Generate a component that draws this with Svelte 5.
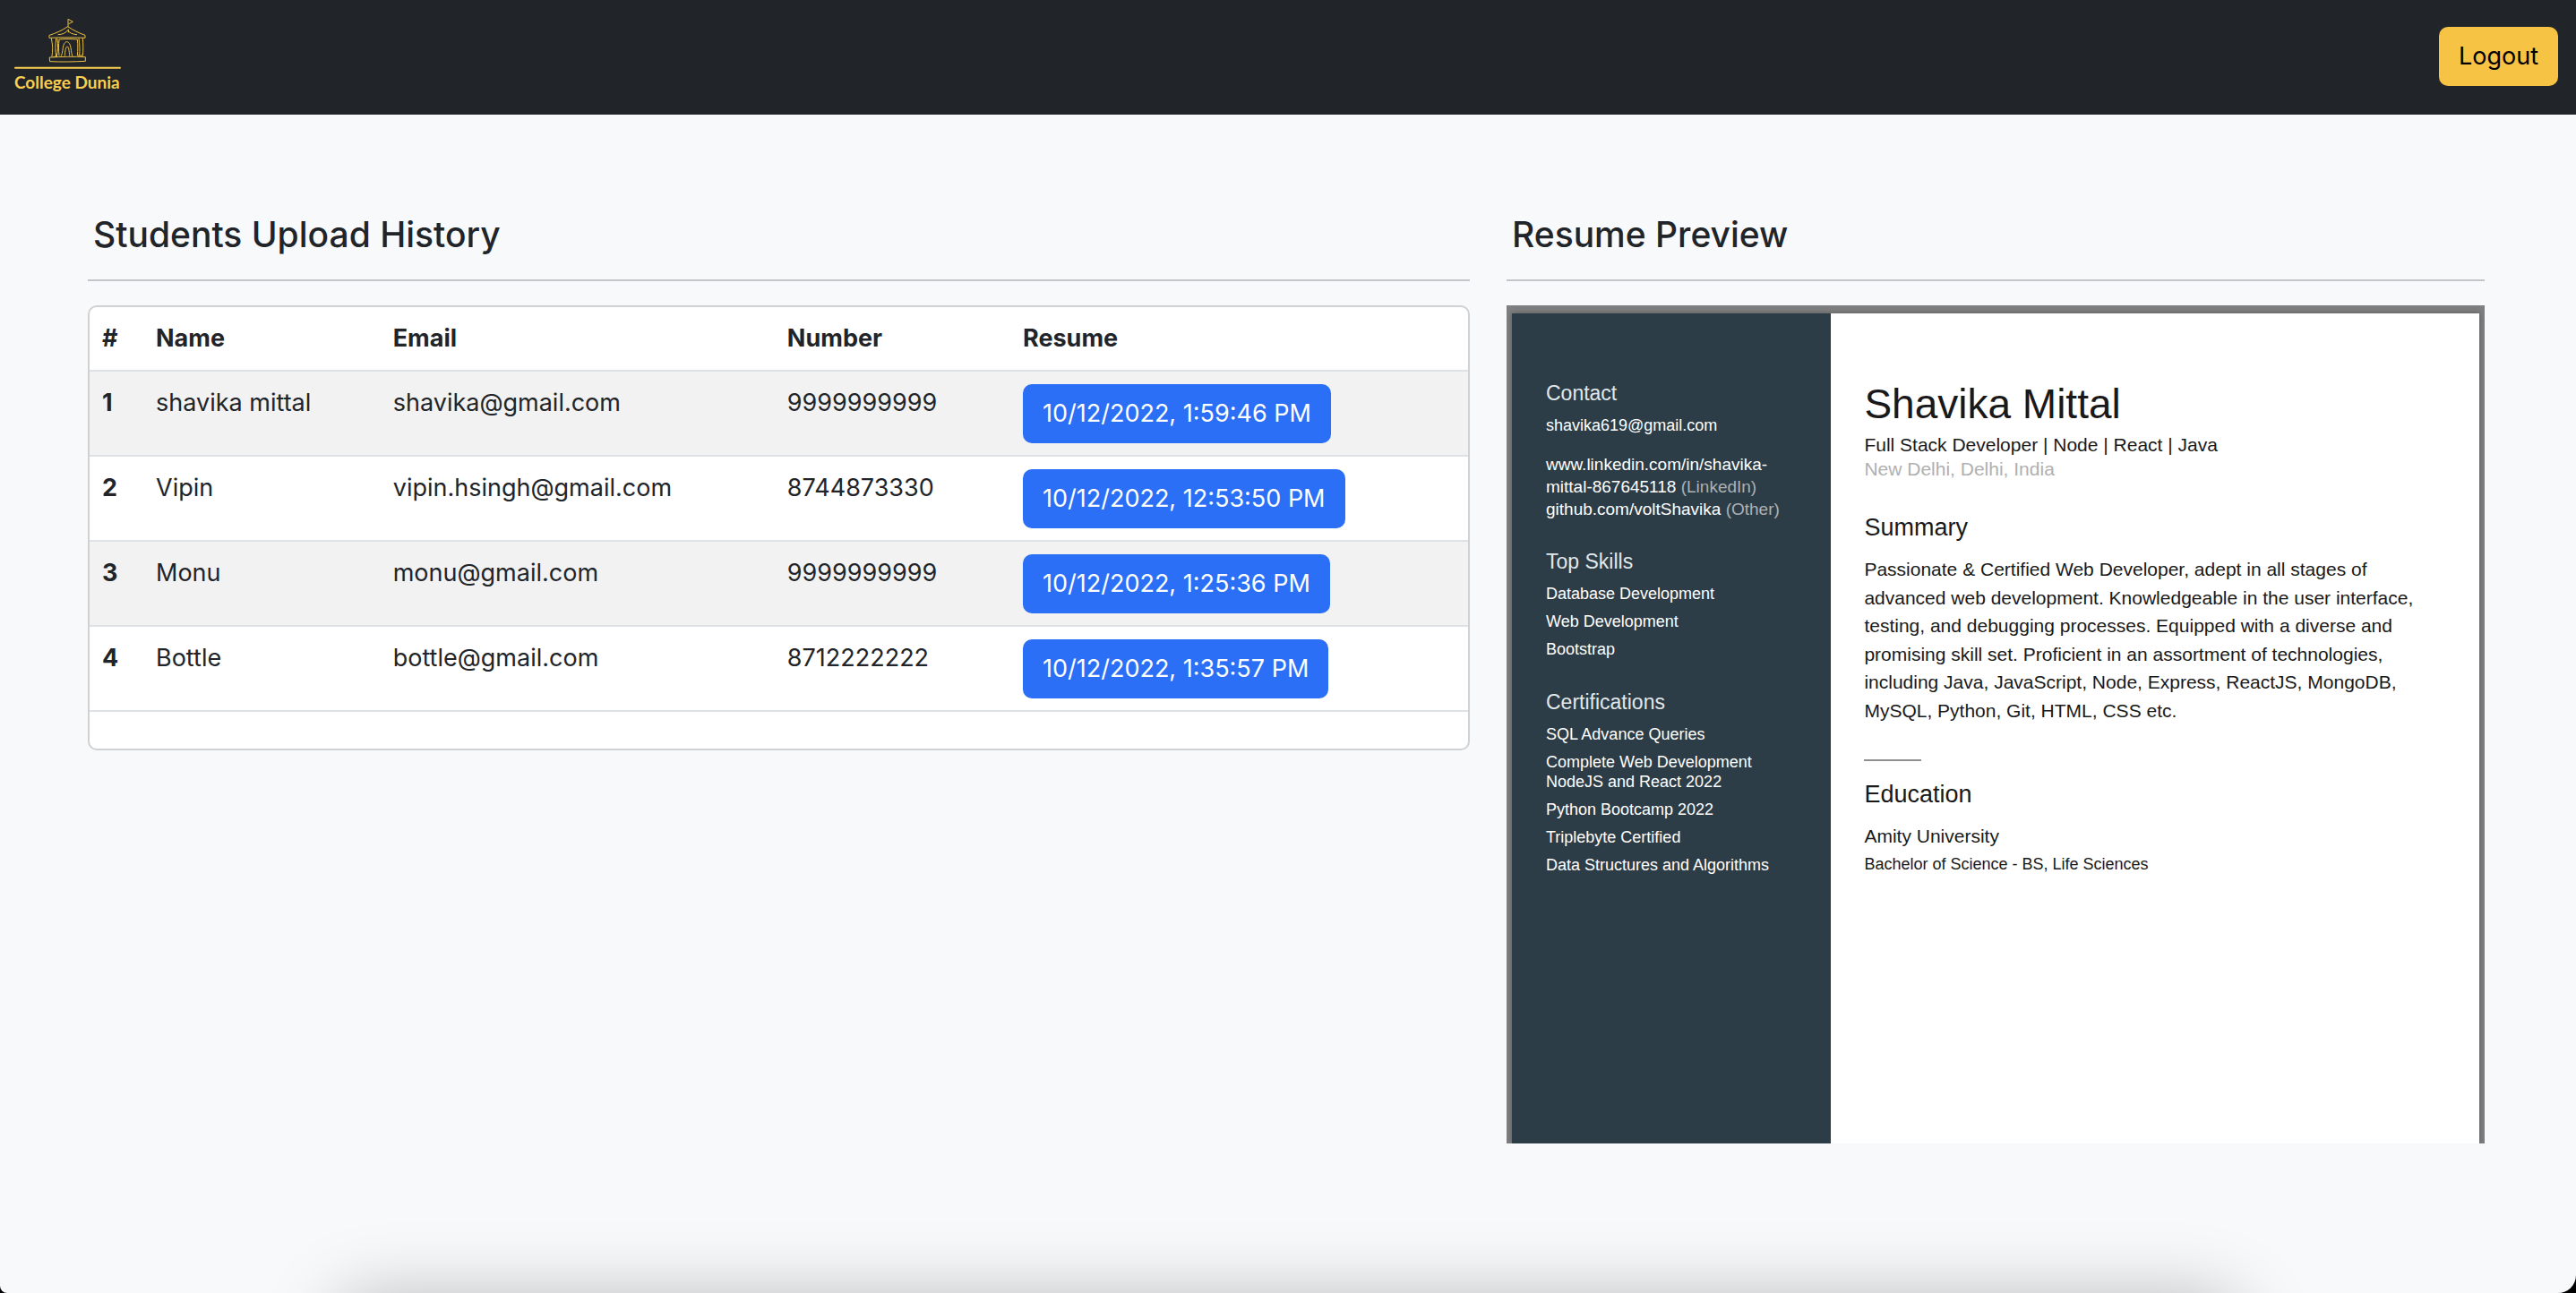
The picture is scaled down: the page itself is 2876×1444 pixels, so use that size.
<script lang="ts">
  const students = [
    { name: 'shavika mittal', email: 'shavika@gmail.com', number: '9999999999', resume: '10/12/2022, 1:59:46 PM' },
    { name: 'Vipin', email: 'vipin.hsingh@gmail.com', number: '8744873330', resume: '10/12/2022, 12:53:50 PM' },
    { name: 'Monu', email: 'monu@gmail.com', number: '9999999999', resume: '10/12/2022, 1:25:36 PM' },
    { name: 'Bottle', email: 'bottle@gmail.com', number: '8712222222', resume: '10/12/2022, 1:35:57 PM' },
  ];
  const skills = ['Database Development', 'Web Development', 'Bootstrap'];
  const certifications = [
    'SQL Advance Queries',
    'Complete Web Development NodeJS and React 2022',
    'Python Bootcamp 2022',
    'Triplebyte Certified',
    'Data Structures and Algorithms',
  ];
</script>

<div class="page">
  <header class="navbar">
    <a class="brand" href="/">
      <svg class="building" viewBox="48 58 357 174" aria-hidden="true">
        <g fill="none" stroke="#e9bf45" stroke-width="3" stroke-linecap="round" stroke-linejoin="round">
          <path d="M228 88V62l16 9-14 7" />
          <path d="M166 116c22-7 42-16 61-29 18 12 38 22 58 29v9c-40-2-80-2-119 0z" />
          <path d="M195 114c14 0 26-6 32-15 5 9 16 14 30 15M229 97v9" />
          <path d="M172 127c5 20 5 42 2 60M188 127c-3 20-3 42 0 60M192 128c3 20 2 42-2 58M179 189c4-2 8-2 12-1" />
          <path d="M264 127c3 20 4 40 2 56M277 127c2 20 2 40 0 57M262 184h14" />
          <path d="M198 184c-2-18-2-36 0-54 20-2 40-2 61 0 2 18 2 36 0 54" />
          <path d="M205 185c6-10 4-24 8-36 3-8 7-11 11-11s8 4 11 11c4 12 3 26 7 36" />
          <path d="M217 184c1-14 3-29 8-30s7 16 8 30" />
          <path d="M167 190c40-2 80-3 119-1v14c-40 2-80 3-118 1z" />
        </g>
        <path d="M51 225h351" stroke="#f8cf4f" stroke-width="6" stroke-linecap="round" />
      </svg>
      <span class="brand-name">College Dunia</span>
    </a>
    <button class="logout" type="button">Logout</button>
  </header>

  <main class="content">
    <section>
      <h2 class="title">Students Upload History</h2>
      <div class="card">
        <table>
          <colgroup>
            <col class="c-index" /><col class="c-name" /><col class="c-email" /><col class="c-number" /><col />
          </colgroup>
          <thead>
            <tr>
              <th scope="col">#</th>
              <th scope="col">Name</th>
              <th scope="col">Email</th>
              <th scope="col">Number</th>
              <th scope="col">Resume</th>
            </tr>
          </thead>
          <tbody>
            {#each students as s, i}
              <tr>
                <th scope="row">{i + 1}</th>
                <td>{s.name}</td>
                <td>{s.email}</td>
                <td>{s.number}</td>
                <td><button class="open" type="button">{s.resume}</button></td>
              </tr>
            {/each}
          </tbody>
        </table>
      </div>
    </section>

    <section>
      <h2 class="title">Resume Preview</h2>
      <div class="viewer">
        <article class="sheet">
          <aside>
            <h4>Contact</h4>
            <p class="mail">shavika619@gmail.com</p>
            <p class="links">
              www.linkedin.com/in/shavika-<br />mittal-867645118 <span>(LinkedIn)</span><br />github.com/voltShavika
              <span>(Other)</span>
            </p>
            <h4>Top Skills</h4>
            <ul>
              {#each skills as skill}<li>{skill}</li>{/each}
            </ul>
            <h4>Certifications</h4>
            <ul>
              {#each certifications as item}<li>{item}</li>{/each}
            </ul>
          </aside>
          <div class="resume">
            <h1>Shavika Mittal</h1>
            <p class="role">Full Stack Developer | Node | React | Java</p>
            <p class="role place">New Delhi, Delhi, India</p>
            <h3 class="summary-title">Summary</h3>
            <p class="summary">
              Passionate &amp; Certified Web Developer, adept in all stages of advanced web development. Knowledgeable in
              the user interface, testing, and debugging processes. Equipped with a diverse and promising skill set.
              Proficient in an assortment of technologies, including Java, JavaScript, Node, Express, ReactJS, MongoDB,
              MySQL, Python, Git, HTML, CSS etc.
            </p>
            <hr />
            <h3>Education</h3>
            <p class="school">Amity University</p>
            <p class="degree">Bachelor of Science - BS, Life Sciences</p>
          </div>
        </article>
      </div>
    </section>
  </main>
  <div class="window-edge" aria-hidden="true"><div class="dock-shadow"></div></div>
</div>

<style>
  :global(body) {
    background: #f8f9fb;
  }
  .page {
    min-height: 100vh;
    color: #212529;
    font-family: Inter, 'Liberation Sans', sans-serif;
    font-size: 27px;
    line-height: 41px;
  }
  h1, h2, h3, h4, p, ul {
    margin: 0;
    padding: 0;
    font-weight: 400;
  }
  button {
    border: 0;
    border-radius: 10px;
    padding: 12px 22px;
    font: inherit;
    line-height: 42px;
    cursor: pointer;
  }

  .navbar {
    display: flex;
    align-items: center;
    justify-content: space-between;
    box-sizing: border-box;
    height: 128px;
    padding: 0 20px 2px 16px;
    background: #212529;
  }
  .brand {
    display: flex;
    flex-direction: column;
    width: 119px;
    color: #f8cf4f;
    text-decoration: none;
  }
  .building {
    display: block;
    width: 100%;
  }
  .brand-name {
    font: 700 19px/28px Lato, sans-serif;
    white-space: nowrap;
  }
  .logout {
    background: #f6c344;
    color: #000;
  }

  .content {
    display: grid;
    grid-template-columns: minmax(0, 1543fr) minmax(0, 1092fr);
    gap: 41px;
    align-items: start;
    padding: 110px 102px 160px 98px;
  }
  .title {
    margin-bottom: 27px;
    padding: 0 6px 26px;
    border-bottom: 2px solid #c4c6c9;
    font-size: 39px;
    line-height: 48px;
    font-weight: 500;
  }

  .card {
    padding-bottom: 41px;
    border: 2px solid #d0d1d3;
    border-radius: 10px;
    background: #fff;
    overflow: hidden;
  }
  table {
    width: 100%;
    table-layout: fixed;
    border-collapse: collapse;
  }
  .c-index { width: 3.9%; }
  .c-name { width: 17.2%; }
  .c-email { width: 28.6%; }
  .c-number { width: 17.1%; }
  th, td {
    padding: 14px 14px 13px;
    border-bottom: 2px solid #dee2e6;
    text-align: left;
    vertical-align: top;
  }
  th {
    font-weight: 700;
  }
  thead th {
    padding-bottom: 15px;
  }
  tbody tr:nth-child(odd) {
    background: #f2f2f2;
  }
  .open {
    display: block;
    background: #2b6ff6;
    color: #fff;
    white-space: nowrap;
  }

  .viewer {
    display: flex;
    box-sizing: border-box;
    min-height: 936px;
    padding: 9px 6px 0;
    background: #7f7f7f;
    overflow: hidden;
  }
  .sheet {
    display: grid;
    grid-template-columns: 33% 1fr;
    flex: 1;
    background: #fff;
    color: #191919;
    font-family: 'Liberation Sans', Arial, sans-serif;
    box-shadow: 0 0 6px rgba(0, 0, 0, 0.3);
  }
  aside {
    padding: 75px 38px 40px;
    background: #2d3d47;
    color: #fff;
    font-size: 18px;
    line-height: 22px;
  }
  h4 {
    margin-bottom: 11px;
    color: #e1e8eb;
    font-size: 23px;
    line-height: 28px;
  }
  .mail {
    margin-bottom: 20px;
  }
  .links {
    margin-bottom: 32px;
    font-size: 19px;
    line-height: 25px;
    white-space: nowrap;
  }
  .links span {
    color: #abb1b5;
  }
  ul {
    display: grid;
    gap: 9px;
    margin-bottom: 34px;
    list-style: none;
  }
  .resume {
    padding: 75px 37px 40px;
    font-size: 21px;
    line-height: 27px;
  }
  h1 {
    margin-bottom: 6px;
    font-size: 46px;
    line-height: 52px;
  }
  h3 {
    font-size: 27px;
    line-height: 32px;
  }
  .place {
    color: #b0b0b0;
  }
  .summary-title {
    margin: 36px 0 15px;
  }
  .summary {
    line-height: 1.5;
  }
  hr {
    width: 64px;
    height: 2px;
    margin: 39px 0 21px;
    border: 0;
    background: #8f8f8f;
  }
  .school {
    margin: 17px 0 5px;
  }
  .degree {
    font-size: 18px;
  }

  .window-edge {
    position: fixed;
    inset: 0;
    overflow: hidden;
    pointer-events: none;
  }
  .window-edge::after {
    content: '';
    position: absolute;
    inset: 0;
    border-radius: 0 0 20px 8px;
    box-shadow: 0 0 0 20px #000;
  }
  .dock-shadow {
    position: absolute;
    top: 100%;
    left: 13%;
    right: 13%;
    height: 120px;
    border-radius: 40px;
    box-shadow: 0 4px 80px rgba(0, 0, 0, 0.25);
  }
</style>
